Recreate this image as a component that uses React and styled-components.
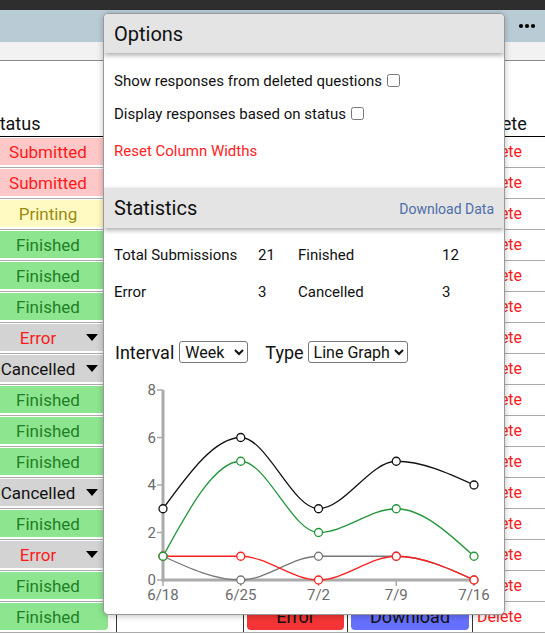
import styled, { createGlobalStyle } from 'styled-components'

const ROWS = [
  'Submitted', 'Submitted', 'Printing', 'Finished', 'Finished', 'Finished', 'Error', 'Cancelled',
  'Finished', 'Finished', 'Finished', 'Cancelled', 'Finished', 'Error', 'Finished', 'Finished'
]

const STATUS_COLORS = {
  Submitted: { bg: '#ffc8c8', fg: '#ff1a1a' },
  Printing: { bg: '#fff9c2', fg: '#9a8a10' },
  Finished: { bg: '#8de58f', fg: '#1f7f26' },
  Error: { bg: '#d3d3d3', fg: '#ff1a1a', menu: true },
  Cancelled: { bg: '#d3d3d3', fg: '#111', menu: true }
}

const SERIES = [
  { name: 'cancelled', color: '#777', values: [1, 0, 1, 1, 0] },
  { name: 'error', color: '#ff2020', values: [1, 1, 0, 1, 0] },
  { name: 'finished', color: '#22963a', values: [1, 5, 2, 3, 1] },
  { name: 'total', color: '#111', values: [3, 6, 3, 5, 4] }
]

const DATES = ['6/18', '6/25', '7/2', '7/9', '7/16']
const X0 = 59
const X_STEP = 77.75
const Y0 = 202
const Y_UNIT = 23.75

const px = i => X0 + i * X_STEP
const py = v => Y0 - v * Y_UNIT

// monotone cubic (same as d3 curveMonotoneX)
function monotonePath (pts) {
  const n = pts.length
  const h = []
  const s = []
  for (let i = 0; i < n - 1; i++) {
    h[i] = pts[i + 1][0] - pts[i][0]
    s[i] = (pts[i + 1][1] - pts[i][1]) / h[i]
  }
  const sign = x => x < 0 ? -1 : 1
  const m = []
  for (let i = 1; i < n - 1; i++) {
    const p = (s[i - 1] * h[i] + s[i] * h[i - 1]) / (h[i - 1] + h[i])
    m[i] = (sign(s[i - 1]) + sign(s[i])) * Math.min(Math.abs(s[i - 1]), Math.abs(s[i]), 0.5 * Math.abs(p)) || 0
  }
  m[0] = (3 * s[0] - m[1]) / 2
  m[n - 1] = (3 * s[n - 2] - m[n - 2]) / 2
  let d = `M${pts[0][0]},${pts[0][1]}`
  for (let i = 0; i < n - 1; i++) {
    const dx = h[i] / 3
    d += ` C${pts[i][0] + dx},${pts[i][1] + dx * m[i]} ${pts[i + 1][0] - dx},${pts[i + 1][1] - dx * m[i + 1]} ${pts[i + 1][0]},${pts[i + 1][1]}`
  }
  return d
}

const GlobalStyle = createGlobalStyle`
  * { box-sizing: border-box; }
  body {
    margin: 0;
    overflow: hidden;
    font-family: Roboto, "Noto Sans", sans-serif;
    color: #111;
    background: #fff;
  }
`

const Page = styled.div`
  position: relative;
  width: 545px;
  height: 634px;
  overflow: hidden;
`

const TopStrip = styled.div`
  height: 10px;
  background: #2e2e2e;
`

const NavBar = styled.div`
  height: 32px;
  background: #b9ccd5;
  display: flex;
  align-items: center;
  justify-content: flex-end;
  padding-right: 9px;
`

const SubBar = styled.div`
  height: 19px;
  background: #f2f2f2;
  border-bottom: 1px solid #888;
`

const COLS = '131px 127px 104px 125px 90px'

const Table = styled.div`
  margin-left: -15px;
  width: 577px;
`

const HeaderRow = styled.div`
  display: grid;
  grid-template-columns: ${COLS};
  height: 76px;
  align-items: end;
  border-bottom: 1px solid #000;
`

const HeaderCell = styled.div`
  font-size: 18px;
  line-height: 22px;
  padding: 0 0 1px 4px;
`

const Row = styled.div`
  display: grid;
  grid-template-columns: ${COLS};
  border-bottom: 1px solid #aaa;
`

const Cell = styled.div`
  padding: 1px 3px 2px;
  min-height: 30px;
  border-left: ${({ $first }) => $first ? 'none' : '1px solid #333'};
`

const StatusCell = styled(Cell)`
  padding: 1px 8px 2px 3px;
`

const StatusBadge = styled.div`
  height: 27px;
  border-radius: 4px;
  background: ${({ $bg }) => $bg};
  color: ${({ $fg }) => $fg};
  font-size: 17px;
  display: flex;
  align-items: center;
  justify-content: center;
  position: relative;
  padding-right: ${({ $menu }) => $menu ? '20px' : '0'};
`

const MenuArrow = styled.svg`
  position: absolute;
  right: 10px;
  top: 10px;
`

const ActionButton = styled.div`
  height: 27px;
  border-radius: 4px;
  background: ${({ $bg }) => $bg};
  color: #111;
  font-size: 18px;
  display: flex;
  align-items: center;
  justify-content: center;
`

const DeleteLink = styled.div`
  color: #ff1a1a;
  font-size: 16px;
  line-height: 27px;
  padding-left: 1px;
`

const Panel = styled.div`
  position: absolute;
  left: 103px;
  top: 13px;
  width: 402px;
  height: 602px;
  background: #fff;
  border: 1px solid #999;
  border-radius: 5px;
  box-shadow: 0 1px 6px rgba(0, 0, 0, 0.25);
  overflow: hidden;
`

const SectionHeader = styled.div`
  height: ${({ $h }) => $h}px;
  background: #e4e4e4;
  display: flex;
  align-items: center;
  justify-content: space-between;
  padding: 0 10px;
  box-shadow: 0 2px 5px rgba(0, 0, 0, 0.35);
  position: relative;
`

const SectionTitle = styled.div`
  font-size: 20px;
  color: #111;
`

const HeaderLink = styled.div`
  font-size: 14px;
  color: #4d6ea8;
  padding-top: 2px;
`

const OptionsBody = styled.div`
  padding: 11px 10px 21px;
`

const OptionRow = styled.label`
  display: flex;
  align-items: center;
  height: 33px;
  font-size: 15px;
`

const Checkbox = styled.input`
  width: 13px;
  height: 13px;
  margin: 0 0 0 5px;
`

const ResetLink = styled.div`
  margin-top: 4px;
  height: 33px;
  display: flex;
  align-items: center;
  font-size: 15px;
  color: #ff2222;
`

const StatsGrid = styled.div`
  display: grid;
  grid-template-columns: 144px 40px 144px 1fr;
  grid-auto-rows: 37px;
  align-items: center;
  padding: 8px 10px 0;
  font-size: 15px;
`

const ControlsRow = styled.div`
  display: flex;
  align-items: center;
  height: 26px;
  margin-top: 29px;
  padding-left: 11px;
  font-size: 18px;
`

const ControlLabel = styled.span`
  margin-right: ${({ $gap }) => $gap}px;
  margin-left: ${({ $lead }) => $lead || 0}px;
`

const Select = styled.select`
  width: ${({ $w }) => $w}px;
  height: 22px;
  font-family: Roboto, sans-serif;
  font-size: 16px;
  color: #111;
  border: 1px solid #767676;
  border-radius: 3px;
  background: #fff;
  padding: 0 1px;
`

const Chart = styled.svg`
  display: block;
  margin-top: 13px;
`

function StatusCellView ({ status }) {
  const c = STATUS_COLORS[status]
  return (
    <StatusCell $first>
      <StatusBadge $bg={c.bg} $fg={c.fg} $menu={c.menu}>
        {status}
        {c.menu && (
          <MenuArrow width='12' height='7' viewBox='0 0 12 7'>
            <polygon points='0,0 12,0 6,7' fill='#000' />
          </MenuArrow>
        )}
      </StatusBadge>
    </StatusCell>
  )
}

function LineChart () {
  return (
    <Chart width='400' height='230'>
      {[0, 2, 4, 6, 8].map(v => (
        <g key={v}>
          <line x1='53' x2='59' y1={py(v)} y2={py(v)} stroke='#aaa' strokeWidth='1.5' />
          <text x='52' y={py(v)} textAnchor='end' dominantBaseline='central' fontSize='15' fill='#6b6b6b' fontFamily='Roboto'>{v}</text>
        </g>
      ))}
      {DATES.map((d, i) => (
        <g key={d}>
          <line x1={px(i)} x2={px(i)} y1={Y0} y2={Y0 + 6} stroke='#aaa' strokeWidth='1.5' />
          <text x={px(i)} y='222' textAnchor='middle' fontSize='15' fill='#6b6b6b' fontFamily='Roboto'>{d}</text>
        </g>
      ))}
      <line x1={X0} x2={X0} y1={py(8)} y2={Y0 + 1.5} stroke='#aaa' strokeWidth='3' />
      <line x1={X0 - 1.5} x2={px(4) + 1} y1={Y0} y2={Y0} stroke='#aaa' strokeWidth='3' />
      {SERIES.map(s => {
        const pts = s.values.map((v, i) => [px(i), py(v)])
        return (
          <g key={s.name}>
            <path d={monotonePath(pts)} fill='none' stroke={s.color} strokeWidth='1.3' />
            {pts.map(([x, y], i) => (
              <circle key={i} cx={x} cy={y} r='4' fill='#fff' stroke={s.color} strokeWidth='1.3' />
            ))}
          </g>
        )
      })}
    </Chart>
  )
}

export default function App () {
  const last = ROWS.length - 1
  return (
    <Page>
      <GlobalStyle />
      <TopStrip />
      <NavBar>
        <svg width='18' height='6' viewBox='0 0 18 6'>
          <circle cx='3' cy='3' r='2.1' fill='#000' />
          <circle cx='9' cy='3' r='2.1' fill='#000' />
          <circle cx='15' cy='3' r='2.1' fill='#000' />
        </svg>
      </NavBar>
      <SubBar />
      <Table>
        <HeaderRow>
          <HeaderCell>Status</HeaderCell>
          <HeaderCell />
          <HeaderCell />
          <HeaderCell />
          <HeaderCell>Delete</HeaderCell>
        </HeaderRow>
        {ROWS.map((status, i) => (
          <Row key={i}>
            <StatusCellView status={status} />
            <Cell />
            <Cell>
              {i === last && <ActionButton $bg='#f53535'>Error</ActionButton>}
            </Cell>
            <Cell>
              {i === last && <ActionButton $bg='#6670fc'>Download</ActionButton>}
            </Cell>
            <Cell>
              <DeleteLink>Delete</DeleteLink>
            </Cell>
          </Row>
        ))}
      </Table>
      <Panel>
        <SectionHeader $h={39}>
          <SectionTitle>Options</SectionTitle>
        </SectionHeader>
        <OptionsBody>
          <OptionRow>
            Show responses from deleted questions
            <Checkbox type='checkbox' />
          </OptionRow>
          <OptionRow>
            Display responses based on status
            <Checkbox type='checkbox' />
          </OptionRow>
          <ResetLink>Reset Column Widths</ResetLink>
        </OptionsBody>
        <SectionHeader $h={40}>
          <SectionTitle>Statistics</SectionTitle>
          <HeaderLink>Download Data</HeaderLink>
        </SectionHeader>
        <StatsGrid>
          <span>Total Submissions</span>
          <span>21</span>
          <span>Finished</span>
          <span>12</span>
          <span>Error</span>
          <span>3</span>
          <span>Cancelled</span>
          <span>3</span>
        </StatsGrid>
        <ControlsRow>
          <ControlLabel $gap={5}>Interval</ControlLabel>
          <Select $w={69} defaultValue='Week'>
            <option>Day</option>
            <option>Week</option>
            <option>Month</option>
          </Select>
          <ControlLabel $lead={17} $gap={4}>Type</ControlLabel>
          <Select $w={100} defaultValue='Line Graph'>
            <option>Line Graph</option>
            <option>Bar Graph</option>
          </Select>
        </ControlsRow>
        <LineChart />
      </Panel>
    </Page>
  )
}
